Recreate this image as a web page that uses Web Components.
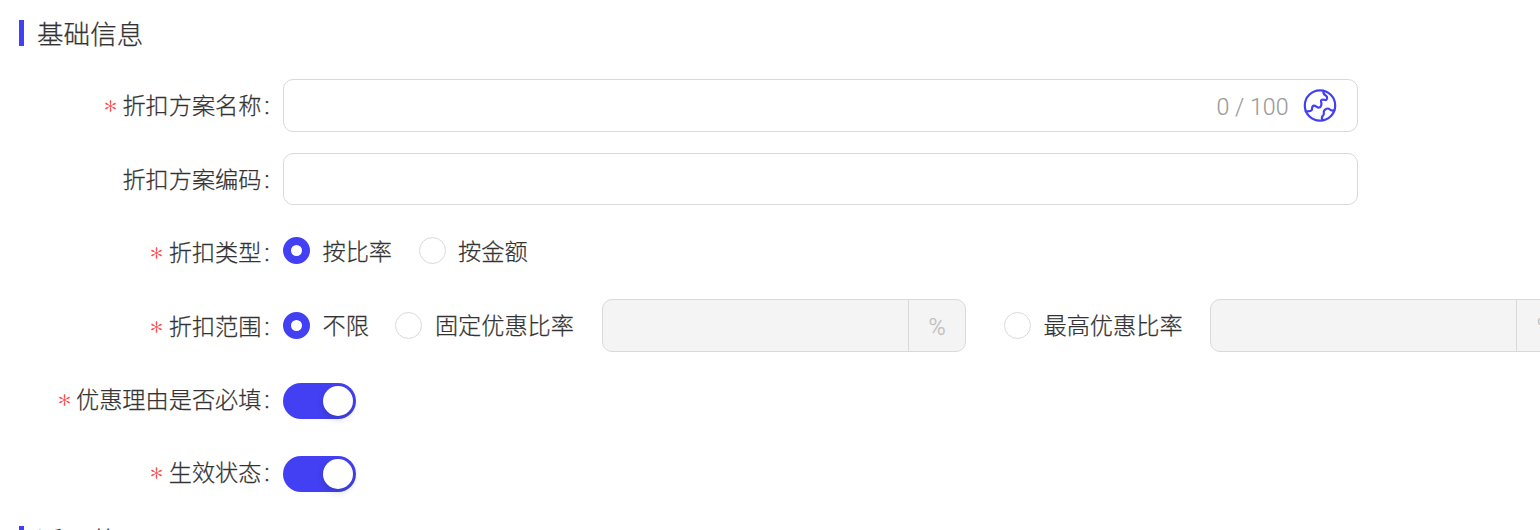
<!DOCTYPE html>
<html lang="zh-CN">
<head>
<meta charset="utf-8">
<title>折扣方案</title>
<style>
html,body{margin:0;height:530px;overflow:hidden;background:#fff}
body{font-family:Roboto,"Noto Sans CJK SC",sans-serif;font-weight:300;font-size:23.2px;color:#333;-webkit-text-stroke:.25px;--brand:#4340f4;--line:#d9d9d9}
</style>
</head>
<body>
<discount-form></discount-form>
<script>
const define = (name, html) => customElements.define(name, class extends HTMLElement {
  constructor() {
    super();
    const t = document.createElement('template');
    t.innerHTML = html;
    this.attachShadow({mode: 'open'}).append(t.content.cloneNode(true));
  }
});

define('section-title', `<style>
:host{display:flex;align-items:center;height:26px;font-size:26.6px;line-height:26px;white-space:nowrap}
i{width:5px;height:26px;background:var(--brand);margin-right:13px}
span{padding-top:var(--title-drop,4px)}
</style><i></i><span><slot></slot></span>`);

define('form-row', `<style>
:host{display:flex;align-items:center;height:53px;white-space:nowrap}
.label{flex:none;width:272.5px;display:flex;justify-content:flex-end;align-items:center;line-height:30px;margin-right:10.5px;padding-top:var(--label-drop,1px);padding-bottom:var(--label-lift,0px)}
.star{display:none;color:#ff4d4f;width:11px;height:12px;margin-right:6.5px}
:host([required]) .star{display:block}
.colon{width:11px;text-align:center;-webkit-text-stroke:.5px}
.content{display:flex;align-items:center}
</style>
<div class="label"><svg class="star" viewBox="0 0 11 12" fill="none" stroke="currentColor" stroke-linecap="round"><path stroke-width=".8" d="M5.5 1v10M1 3.5l9 5M10 3.5l-9 5"/><path stroke-width="1.5" d="M5.5 1v2M5.5 9v2M1 3.5l1.5.8M8.500 7.700l1.500.8M10 3.500l-1.500.8M2.500 7.700l-1.500.8"/></svg><slot name="label"></slot><span class="colon">:</span></div>
<div class="content"><slot></slot></div>`);

define('text-field', `<style>
:host{display:flex;align-items:center;justify-content:flex-end;box-sizing:border-box;width:1075px;height:53px;border:1px solid var(--line);border-radius:10px;padding-right:20px;color:#999;-webkit-text-stroke:.1px}
:host([short]){height:52px}
::slotted(span){padding-top:2px}
::slotted(globe-icon){margin-left:14.500px}
</style><slot></slot>`);

define('globe-icon', `<style>:host{display:block;width:34px;height:34px}svg{display:block}</style>
<svg width="34" height="34" viewBox="0 .5 34 34" fill="none" stroke="#4340f4" stroke-width="2.2" stroke-linecap="round" stroke-linejoin="round"><circle cx="17" cy="17" r="15.200"/><path d="M20.500 2.400c-.5 3 .6 3.900 2.200 4.700 2.200 1.100 1.700 5-.7 4.400-2-.5-4.500-.6-3.900 1.700.7 2.300.3 6-2.300 5.900-2 0-2.900-2-4.900-2-2.200 0-1.500 2.300-2 4.200-.5 1.900-2.900 1.700-6.200 1.500M19.500 31.500c-1.100-2-.6-3.600.7-4.800 1.200-1.200.2-2.800.8-4.200 1-2.200 4-3.500 5.900-1.500 1.300 1.300 2.400 1.300 4.400.9"/></svg>`);

define('radio-option', `<style>
:host{display:flex;align-items:center;line-height:30px}
i{box-sizing:border-box;width:27px;height:27px;border:1px solid var(--line);border-radius:50%;margin-right:12.500px;background:#fff}
:host([checked]) i{border:8.500px solid var(--brand)}
span{padding-top:2px}
</style><i></i><span><slot></slot></span>`);

define('percent-field', `<style>
:host{display:flex;flex:none;box-sizing:border-box;width:364px;height:53px;border:1px solid var(--line);border-radius:10px;background:#f4f4f4;color:#bfbfbf}
.v{flex:1}
.u{box-sizing:border-box;width:57px;border-left:1px solid var(--line);display:flex;align-items:center;justify-content:center;padding-top:4px}
</style><div class="v"></div><div class="u">%</div>`);

define('toggle-switch', `<style>
:host{display:flex;justify-content:flex-end;align-items:center;box-sizing:border-box;width:73px;height:36px;border-radius:18px;background:var(--brand);padding:3px}
i{width:30px;height:30px;border-radius:50%;background:#fff;box-shadow:0 3px 7px rgba(0,35,11,.2)}
</style><i></i>`);

define('discount-form', `<style>
:host{display:block;width:1540px;height:530px;overflow:hidden}
section-title{margin-left:19px}
.first{margin-top:20px;margin-bottom:33px}
form-row{margin-bottom:20.300px}
.low{--label-drop:3px}
.type{--label-drop:2px}
.high{--label-drop:0px;--label-lift:1px}
.type radio-option{margin-bottom:3px}
.second{margin-top:25.500px;--title-drop:6px}
</style>
<section-title class="first">基础信息</section-title>
<form-row required><span slot="label">折扣方案名称</span><text-field><span>0 / 100</span><globe-icon></globe-icon></text-field></form-row>
<form-row class="low"><span slot="label">折扣方案编码</span><text-field short></text-field></form-row>
<form-row required class="type"><span slot="label">折扣类型</span><radio-option checked>按比率</radio-option><radio-option style="margin-left:26.500px">按金额</radio-option></form-row>
<form-row required class="low"><span slot="label">折扣范围</span><radio-option checked>不限</radio-option><radio-option style="margin-left:26.500px">固定优惠比率</radio-option><percent-field style="margin-left:28px"></percent-field><radio-option style="margin-left:38px">最高优惠比率</radio-option><percent-field style="margin-left:27.800px"></percent-field></form-row>
<form-row required class="high" style="padding-top:2px"><span slot="label">优惠理由是否必填</span><toggle-switch></toggle-switch></form-row>
<form-row required class="high" style="margin-bottom:0"><span slot="label">生效状态</span><toggle-switch></toggle-switch></form-row>
<section-title class="second">适用范围</section-title>`);
</script>
</body>
</html>
